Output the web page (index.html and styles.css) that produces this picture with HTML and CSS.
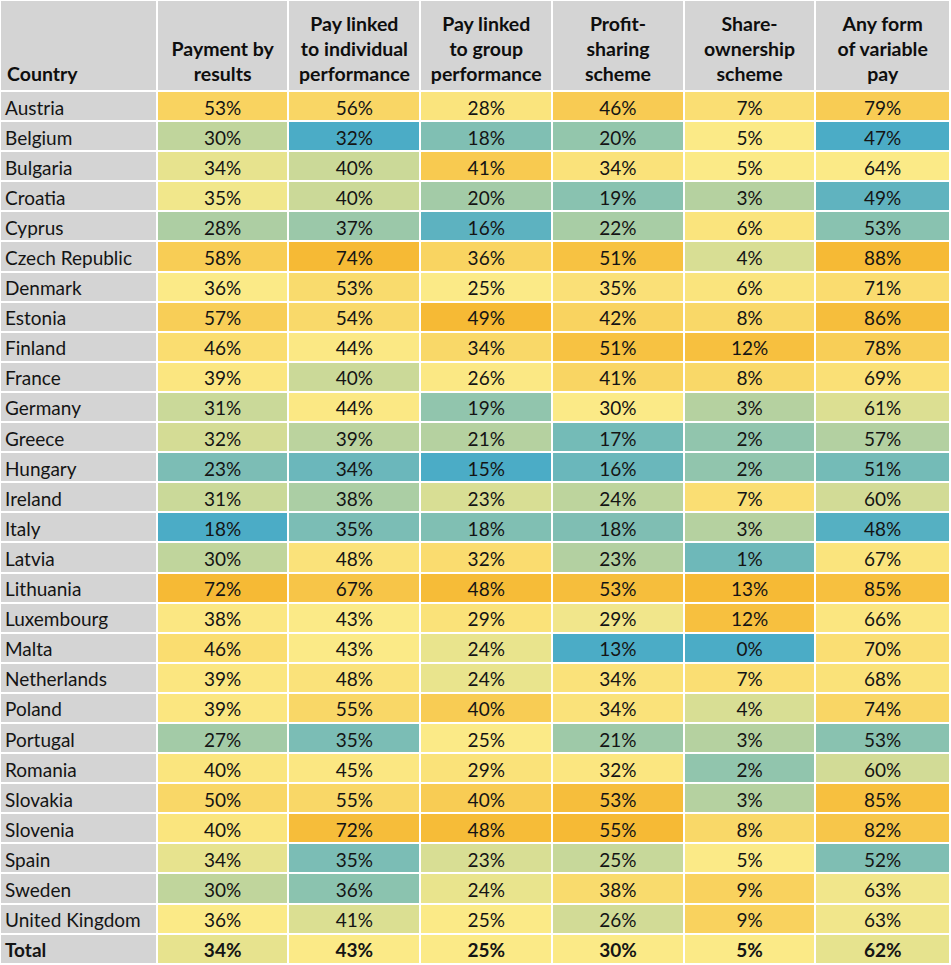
FILE: index.html
```html
<!DOCTYPE html>
<html lang="en">
<head>
<meta charset="utf-8">
<title>Variable pay by country</title>
<link rel="stylesheet" href="styles.css">
</head>
<body>
<table class="heat">
  <colgroup>
    <col class="c-country">
    <col class="c-val"><col class="c-val"><col class="c-val"><col class="c-val"><col class="c-val">
    <col class="c-last">
  </colgroup>
  <thead>
    <tr>
      <th class="h-country">Country</th>
      <th>Payment by<br>results</th>
      <th>Pay linked<br>to individual<br>performance</th>
      <th>Pay linked<br>to group<br>performance</th>
      <th>Profit-<br>sharing<br>scheme</th>
      <th>Share-<br>ownership<br>scheme</th>
      <th>Any form<br>of variable<br>pay</th>
    </tr>
  </thead>
  <tbody>
    <tr><td>Austria</td><td>53%</td><td>56%</td><td>28%</td><td>46%</td><td>7%</td><td>79%</td></tr>
    <tr><td>Belgium</td><td>30%</td><td>32%</td><td>18%</td><td>20%</td><td>5%</td><td>47%</td></tr>
    <tr><td>Bulgaria</td><td>34%</td><td>40%</td><td>41%</td><td>34%</td><td>5%</td><td>64%</td></tr>
    <tr><td>Croatia</td><td>35%</td><td>40%</td><td>20%</td><td>19%</td><td>3%</td><td>49%</td></tr>
    <tr><td>Cyprus</td><td>28%</td><td>37%</td><td>16%</td><td>22%</td><td>6%</td><td>53%</td></tr>
    <tr><td>Czech Republic</td><td>58%</td><td>74%</td><td>36%</td><td>51%</td><td>4%</td><td>88%</td></tr>
    <tr><td>Denmark</td><td>36%</td><td>53%</td><td>25%</td><td>35%</td><td>6%</td><td>71%</td></tr>
    <tr><td>Estonia</td><td>57%</td><td>54%</td><td>49%</td><td>42%</td><td>8%</td><td>86%</td></tr>
    <tr><td>Finland</td><td>46%</td><td>44%</td><td>34%</td><td>51%</td><td>12%</td><td>78%</td></tr>
    <tr><td>France</td><td>39%</td><td>40%</td><td>26%</td><td>41%</td><td>8%</td><td>69%</td></tr>
    <tr><td>Germany</td><td>31%</td><td>44%</td><td>19%</td><td>30%</td><td>3%</td><td>61%</td></tr>
    <tr><td>Greece</td><td>32%</td><td>39%</td><td>21%</td><td>17%</td><td>2%</td><td>57%</td></tr>
    <tr><td>Hungary</td><td>23%</td><td>34%</td><td>15%</td><td>16%</td><td>2%</td><td>51%</td></tr>
    <tr><td>Ireland</td><td>31%</td><td>38%</td><td>23%</td><td>24%</td><td>7%</td><td>60%</td></tr>
    <tr><td>Italy</td><td>18%</td><td>35%</td><td>18%</td><td>18%</td><td>3%</td><td>48%</td></tr>
    <tr><td>Latvia</td><td>30%</td><td>48%</td><td>32%</td><td>23%</td><td>1%</td><td>67%</td></tr>
    <tr><td>Lithuania</td><td>72%</td><td>67%</td><td>48%</td><td>53%</td><td>13%</td><td>85%</td></tr>
    <tr><td>Luxembourg</td><td>38%</td><td>43%</td><td>29%</td><td>29%</td><td>12%</td><td>66%</td></tr>
    <tr><td>Malta</td><td>46%</td><td>43%</td><td>24%</td><td>13%</td><td>0%</td><td>70%</td></tr>
    <tr><td>Netherlands</td><td>39%</td><td>48%</td><td>24%</td><td>34%</td><td>7%</td><td>68%</td></tr>
    <tr><td>Poland</td><td>39%</td><td>55%</td><td>40%</td><td>34%</td><td>4%</td><td>74%</td></tr>
    <tr><td>Portugal</td><td>27%</td><td>35%</td><td>25%</td><td>21%</td><td>3%</td><td>53%</td></tr>
    <tr><td>Romania</td><td>40%</td><td>45%</td><td>29%</td><td>32%</td><td>2%</td><td>60%</td></tr>
    <tr><td>Slovakia</td><td>50%</td><td>55%</td><td>40%</td><td>53%</td><td>3%</td><td>85%</td></tr>
    <tr><td>Slovenia</td><td>40%</td><td>72%</td><td>48%</td><td>55%</td><td>8%</td><td>82%</td></tr>
    <tr><td>Spain</td><td>34%</td><td>35%</td><td>23%</td><td>25%</td><td>5%</td><td>52%</td></tr>
    <tr><td>Sweden</td><td>30%</td><td>36%</td><td>24%</td><td>38%</td><td>9%</td><td>63%</td></tr>
    <tr><td>United Kingdom</td><td>36%</td><td>41%</td><td>25%</td><td>26%</td><td>9%</td><td>63%</td></tr>
    <tr class="total"><td>Total</td><td>34%</td><td>43%</td><td>25%</td><td>30%</td><td>5%</td><td>62%</td></tr>
  </tbody>
</table>
<script src="script.js"></script>
</body>
</html>
```

FILE: styles.css
```css
html, body {
  margin: 0;
  padding: 0;
  background: #ffffff;
  overflow: hidden;
}

.heat {
  border-collapse: separate;
  border-spacing: 2px;
  margin: -1px 0 0 -1px;
  table-layout: fixed;
  font-family: "Lato", "Liberation Sans", sans-serif;
  color: #141414;
}

.c-country { width: 155px; }
.c-val { width: 130px; }
.c-last { width: 133px; }

.heat th {
  background: #d4d4d4;
  height: 85px;
  padding: 0 1px 4px;
  font-size: 19.5px;
  line-height: 25px;
  font-weight: 700;
  text-align: center;
  vertical-align: bottom;
  color: #0e0e0e;
}

.heat th.h-country {
  text-align: left;
  padding-left: 6px;
}

.heat td {
  height: 25.1px;
  padding: 3px 0 0;
  font-size: 19px;
  line-height: 22px;
  text-align: center;
  vertical-align: middle;
  white-space: nowrap;
  background: #fbea87;
}

.heat td:first-child {
  background: #d4d4d4;
  text-align: left;
  padding-left: 4px;
}

.heat tr.total td {
  font-weight: 700;
}
```

FILE: script.js
```js
(function () {
  var low = [75, 172, 198];
  var mid = [251, 234, 135];
  var high = [246, 186, 53];

  function mix(a, b, t) {
    return 'rgb(' + a.map(function (v, i) {
      return Math.round(v + (b[i] - v) * t);
    }).join(',') + ')';
  }

  var rows = Array.prototype.slice.call(document.querySelectorAll('.heat tbody tr'));
  var cols = rows[0].children.length;
  for (var c = 1; c < cols; c++) {
    var cells = rows.map(function (r) { return r.children[c]; });
    var vals = cells.map(function (td) { return parseFloat(td.textContent); });
    var sorted = vals.slice().sort(function (a, b) { return a - b; });
    var min = sorted[0], max = sorted[sorted.length - 1];
    var pos = (sorted.length - 1) * 0.5;
    var lo = Math.floor(pos), hi = Math.ceil(pos);
    var med = sorted[lo] + (sorted[hi] - sorted[lo]) * (pos - lo);
    cells.forEach(function (td, i) {
      var v = vals[i], col;
      if (v <= med) {
        col = mix(low, mid, med === min ? 1 : (v - min) / (med - min));
      } else {
        col = mix(mid, high, max === med ? 0 : (v - med) / (max - med));
      }
      td.style.backgroundColor = col;
    });
  }
})();
```
